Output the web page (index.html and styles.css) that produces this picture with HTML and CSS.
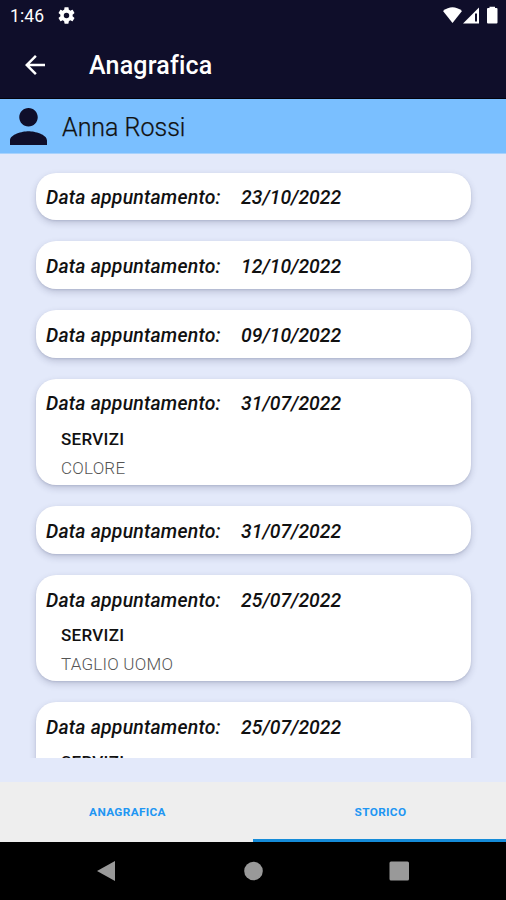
FILE: index.html
```html
<!DOCTYPE html>
<html lang="it">
<head>
<meta charset="utf-8">
<meta name="viewport" content="width=device-width, initial-scale=1">
<title>Anagrafica</title>
<link rel="stylesheet" href="styles.css">
</head>
<body>
<header class="top">
  <div class="status">
    <span class="clock">1:46</span>
    <svg class="gear" viewBox="2 2 20 20"><path fill-rule="evenodd" d="M19.14 12.94c.04-.3.06-.61.06-.94s-.02-.64-.07-.94l2.03-1.58c.18-.14.23-.41.12-.61l-1.92-3.32c-.12-.22-.37-.29-.59-.22l-2.39.96c-.5-.38-1.03-.7-1.62-.94l-.36-2.54c-.04-.24-.24-.41-.48-.41h-3.84c-.24 0-.43.17-.47.41l-.36 2.54c-.59.24-1.13.57-1.62.94l-2.39-.96c-.22-.08-.47 0-.59.22L2.74 8.87c-.12.21-.08.47.12.61l2.03 1.58c-.05.3-.09.63-.09.94s.02.64.07.94l-2.03 1.58c-.18.14-.23.41-.12.61l1.92 3.32c.12.22.37.29.59.22l2.39-.96c.5.38 1.03.7 1.62.94l.36 2.54c.05.24.24.41.48.41h3.84c.24 0 .44-.17.47-.41l.36-2.54c.59-.24 1.13-.56 1.62-.94l2.39.96c.22.08.47 0 .59-.22l1.92-3.32c.12-.22.07-.47-.12-.61zM12 15.2a3.2 3.2 0 1 1 0-6.4 3.2 3.2 0 0 1 0 6.4z"/></svg>
    <svg class="signals" viewBox="0 0 58 18"><path d="M0 5Q9.500-2.500 19 5L9.500 17z"/><path fill-rule="evenodd" d="M20 17.500L36 1.500V17.500zM32 7.500V15.500H34V7.500z"/><path d="M44 3Q44 2 45 2H46.500V.8H52V2H53.500Q54.500 2 54.500 3V16.500Q54.500 17.500 53.500 17.500H45Q44 17.500 44 16.500z"/></svg>
  </div>
  <div class="appbar">
    <svg class="back" viewBox="4 4 16 16"><path d="M20 11H7.830l5.590-5.590L12 4l-8 8 8 8 1.410-1.410L7.830 13H20z"/></svg>
    <h1>Anagrafica</h1>
  </div>
</header>
<section class="person">
  <svg class="avatar" viewBox="4 4 16 16" preserveAspectRatio="none"><path d="M12 12c2.210 0 4-1.790 4-4s-1.790-4-4-4-4 1.790-4 4 1.790 4 4 4zm0 2c-2.670 0-8 1.340-8 4v2h16v-2c0-2.660-5.330-4-8-4z"/></svg>
  <span class="name">Anna Rossi</span>
</section>
<main class="history">
  <article class="card"><div class="row"><span class="label">Data appuntamento:</span><span class="date">23/10/2022</span></div></article>
  <article class="card"><div class="row"><span class="label">Data appuntamento:</span><span class="date">12/10/2022</span></div></article>
  <article class="card"><div class="row"><span class="label">Data appuntamento:</span><span class="date">09/10/2022</span></div></article>
  <article class="card open"><div class="row"><span class="label">Data appuntamento:</span><span class="date">31/07/2022</span></div><h2>SERVIZI</h2><p>COLORE</p></article>
  <article class="card"><div class="row"><span class="label">Data appuntamento:</span><span class="date">31/07/2022</span></div></article>
  <article class="card open"><div class="row"><span class="label">Data appuntamento:</span><span class="date">25/07/2022</span></div><h2>SERVIZI</h2><p>TAGLIO UOMO</p></article>
  <article class="card open"><div class="row"><span class="label">Data appuntamento:</span><span class="date">25/07/2022</span></div><h2>SERVIZI</h2></article>
</main>
<nav class="tabs">
  <a class="tab">ANAGRAFICA</a>
  <a class="tab active">STORICO</a>
</nav>
<footer class="system">
  <svg viewBox="0 0 20 20"><path d="M0 10L18 0V20z"/></svg>
  <svg viewBox="0 0 20 20"><circle cx="10.500" cy="10" r="9.300"/></svg>
  <svg viewBox="0 0 20 20"><rect x=".5" y=".5" width="19.500" height="19" rx="1.500"/></svg>
</footer>
</body>
</html>
```
FILE: styles.css
```css
* { box-sizing: border-box; }
body {
  margin: 0;
  width: 506px;
  height: 900px;
  overflow: hidden;
  display: flex;
  flex-direction: column;
  background: #e3e9fa;
  color: #111;
  font-family: Roboto, sans-serif;
}
h1, h2, p { margin: 0; }
svg { display: block; flex: none; }
.top { height: 99px; flex: none; background: #0f0e2a; color: #fff; fill: #fff; border-bottom: 1px solid #03030c; }
.status { height: 32px; display: flex; align-items: center; padding: 0 5px 0 10px; }
.clock { width: 48px; font-size: 17.5px; letter-spacing: 0.1px; }
.gear { width: 17px; height: 17px; margin-top: -1px; }
.signals { width: 58px; height: 18px; margin-left: auto; margin-top: -2px; }
.appbar { height: 66px; display: flex; align-items: center; padding-left: 25px; }
.back { width: 20px; height: 20px; }
h1 { margin-left: 44px; font-size: 25px; line-height: 30px; font-weight: 500; letter-spacing: 0.2px; padding-top: 2px; }
.person { height: 55px; flex: none; display: flex; align-items: center; padding-left: 10px; background: #7abfff; border-bottom: 1px solid #a7d2fd; }
.avatar { width: 37px; height: 37px; fill: #0f0e2a; }
.name { margin-left: 15px; font-size: 25px; line-height: 30px; padding-top: 3px; font-weight: 300; -webkit-text-stroke: 0.25px; }
.history { height: 604px; flex: none; overflow: hidden; padding: 18.6px 35px 0 36px; display: flex; flex-direction: column; gap: 21.3px; }
.card { height: 47.5px; flex: none; background: #fff; border-radius: 20px; padding: 13px 10px 0; box-shadow: 0 3px 7px rgba(35, 40, 80, .2), 0 1px 2px rgba(35, 40, 80, .12); }
.card.open { height: 106px; }
.row { height: 24px; display: flex; align-items: center; font-size: 19.4px; font-style: italic; font-weight: 500; white-space: nowrap; }
.label { width: 195px; letter-spacing: 0.22px; }
h2 { margin: 11px 0 0 15px; font-size: 17px; line-height: 24px; font-weight: 500; letter-spacing: 0.3px; }
p { margin: 5px 0 0 15px; font-size: 17px; line-height: 24px; font-weight: 300; letter-spacing: 0.22px; color: #555; }
.tabs { height: 60px; flex: none; margin-top: 24px; display: flex; background: #eee; }
.tab { flex: 1; display: flex; align-items: center; justify-content: center; padding: 3px 0 0 2px; border-bottom: 3px solid transparent; color: #2196f3; font-size: 11.8px; font-weight: 700; letter-spacing: 0.35px; }
.tab.active { border-bottom-color: #158bd8; }
.system { flex: 1; display: flex; align-items: center; justify-content: center; gap: 126px; background: #000; fill: #999; }
.system svg { width: 20px; height: 20px; }
```
